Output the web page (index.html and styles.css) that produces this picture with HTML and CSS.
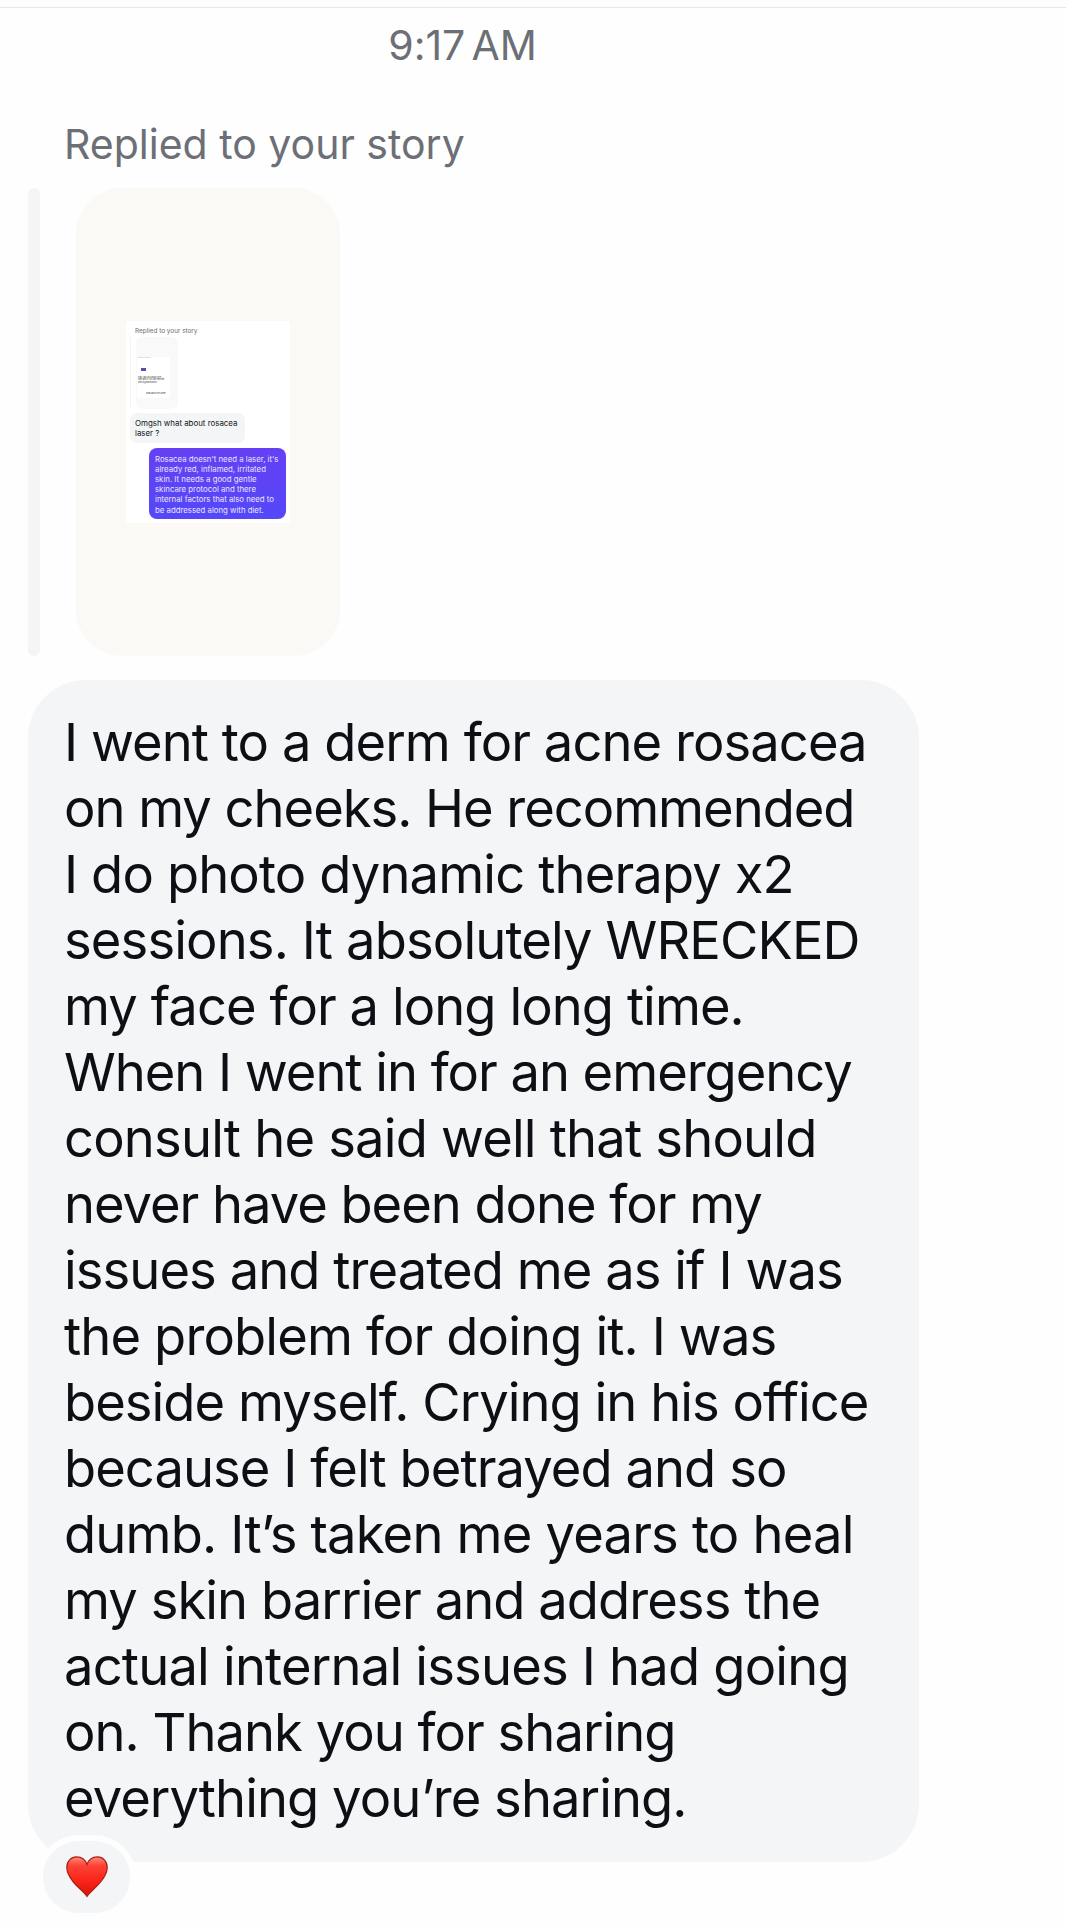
FILE: index.html
```html
<!DOCTYPE html>
<html lang="en">
<head>
<meta charset="utf-8">
<title>Messages</title>
<link rel="stylesheet" href="styles.css">
</head>

<body>
	<div class="thread">
		<div class="time">9:17 AM</div>
		<div class="context">Replied to your story</div>

		<div class="story">
			<div class="bar"></div>
			<div class="story-card">
				<div class="shot">
					<div class="shot-title">Replied to your story</div>
					<div class="shot-story">
						<div class="shot-bar"></div>
						<div class="shot-thumb">
							<div class="mini">
								<p class="mini-label">Replied to your story</p>
								<div class="mini-reply"></div>
								<p class="mini-text">Can I ask you about skin<br>care and if you can help me<br>with a good product</p>
								<p class="mini-foot">what about this laser</p>
							</div>
						</div>
					</div>
					<div class="shot-in">Omgsh what about rosacea<br>laser ?</div>
					<div class="shot-out">Rosacea doesn't need a laser, it's<br>already red, inflamed, irritated<br>skin. It needs a good gentle<br>skincare protocol and there<br>internal factors that also need to<br>be addressed along with diet.</div>
				</div>
			</div>
		</div>

		<div class="bubble">
			<p class="message">
				<span class="l1">I went to a derm for acne rosacea</span><br>
				<span class="l2">on my cheeks. He recommended</span><br>
				<span class="l3">I do photo dynamic therapy x2</span><br>
				<span class="l4">sessions. It absolutely WRECKED</span><br>
				<span class="l5">my face for a long long time.</span><br>
				<span class="l6">When I went in for an emergency</span><br>
				<span class="l7">consult he said well that should</span><br>
				<span class="l8">never have been done for my</span><br>
				<span class="l9">issues and treated me as if I was</span><br>
				<span class="l10">the problem for doing it. I was</span><br>
				<span class="l11">beside myself. Crying in his office</span><br>
				<span class="l12">because I felt betrayed and so</span><br>
				<span class="l13">dumb. It’s taken me years to heal</span><br>
				<span class="l14">my skin barrier and address the</span><br>
				<span class="l15">actual internal issues I had going</span><br>
				<span class="l16">on. Thank you for sharing</span><br>
				<span class="l17">everything you’re sharing.</span>
			</p>
			<div class="reaction">
				<svg class="heart" viewBox="0 0 42 42">
					<defs>
						<linearGradient id="red" x1="0" y1="0" x2="0" y2="1">
							<stop offset="0" stop-color="#ff8a78"/>
							<stop offset=".22" stop-color="#fc4336"/>
							<stop offset=".6" stop-color="#fb2419"/>
							<stop offset="1" stop-color="#d41408"/>
						</linearGradient>
					</defs>
					<path d="M21 40.4C18 36.500 12 31.500 7 25.500C3 20.500 .8 16.500 .8 11.500C.8 5.200 5 .9 10.700 .9C15.500 .9 19.300 3.700 21 8.500C22.700 3.700 26.500 .9 31.300 .9C37 .9 41.200 5.200 41.200 11.500C41.200 16.500 39 20.500 35 25.500C30 31.500 24 36.500 21 40.400Z" fill="url(#red)" stroke="#a91e14" stroke-width="1.200"/>
				</svg>
			</div>
		</div>
	</div>
</body>
</html>
```

FILE: styles.css
```css
body {
	margin: 0;
	background: #fefefe;
	font-family: Inter, "Liberation Sans", sans-serif;
}

p {
	margin: 0;
}

.thread {
	box-sizing: border-box;
	height: 1920px;
	overflow: hidden;
	margin-top: 7px;
	border-top: 1px solid #e6e7e9;
	padding: 12px 28px 0;
	white-space: nowrap;
}

.time {
	width: 869px;
	height: 50px;
	text-align: center;
	font-size: 41px;
	line-height: 50px;
	word-spacing: -5px;
	letter-spacing: -0.1px;
	color: #6c6f76;
}

.context {
	margin: 49px 0 18px 36px;
	height: 51px;
	font-size: 41px;
	line-height: 51px;
	color: #6c6f76;
}

.story {
	display: flex;
	gap: 36px;
	height: 468px;
}

.bar {
	width: 12px;
	border-radius: 6px;
	background: #f3f5f7;
}

.story-card {
	display: flex;
	align-items: center;
	justify-content: center;
	width: 264px;
	border-radius: 46px;
	background: #faf9f5;
}

.shot {
	box-sizing: border-box;
	width: 164px;
	height: 202px;
	padding: 5px 4px 3px;
	border-radius: 4px;
	background: #fff;
}

.shot-title {
	margin-left: 5px;
	height: 11px;
	font-size: 6.4px;
	line-height: 10px;
	color: #6c6f76;
}

.shot-story {
	display: flex;
	gap: 5px;
	height: 72px;
}

.shot-bar {
	width: 1px;
	background: #f2f3f5;
}

.shot-thumb {
	box-sizing: border-box;
	width: 42px;
	padding: 20px 8px 0 1px;
	border-radius: 7px;
	background: #f9f9fa;
}

.mini {
	width: 33px;
	height: 41px;
	background: #fff;
	border-radius: 2px;
	color: #333;
}

.mini-label {
	margin-left: 1px;
	font-size: 1.3px;
	line-height: 2px;
	color: #777;
}

.mini-reply {
	width: 5px;
	height: 3px;
	margin: 9px 0 5px 4px;
	background: #5650b4;
}

.mini-text {
	margin-left: 1px;
	font-size: 2px;
	line-height: 2.3px;
}

.mini-foot {
	margin: 9px 0 0 9px;
	font-size: 2px;
	line-height: 2px;
}

.shot-in {
	box-sizing: border-box;
	width: 115px;
	height: 30px;
	margin-top: 4px;
	padding: 5px 0 0 5px;
	border-radius: 7px;
	background: #f3f5f7;
	font-size: 7.9px;
	line-height: 10.2px;
	color: #111418;
}

.shot-out {
	box-sizing: border-box;
	width: 137px;
	height: 71px;
	margin: 5px 0 0 auto;
	padding: 5.5px 0 0 6px;
	border-radius: 8px;
	background: linear-gradient(#6540f4, #5448f8);
	font-size: 7.8px;
	line-height: 10.2px;
	color: #e9e4ff;
}

.bubble {
	box-sizing: border-box;
	position: relative;
	width: 891px;
	height: 1182px;
	margin-top: 24px;
	padding: 29px 0 0 36px;
	border-radius: 58px;
	background: #f3f5f7;
}

.message {
	font-size: 52.5px;
	line-height: 66px;
	color: #0c1014;
}

/* tracking per line */
.l1, .l5, .l9, .l12, .l14, .l17 {
	letter-spacing: -0.94px;
}

.l2, .l6, .l8 {
	letter-spacing: -1.03px;
}

.l3, .l4, .l10 {
	letter-spacing: -0.87px;
}

.l7, .l13, .l15 {
	letter-spacing: -0.81px;
}

.l11, .l16 {
	letter-spacing: -0.97px;
}

/* sits over the bottom edge of the bubble */
.reaction {
	position: absolute;
	left: 9px;
	top: 1155px;
	display: flex;
	align-items: center;
	justify-content: center;
	width: 87px;
	height: 72px;
	border: 6px solid #fefefe;
	border-radius: 42px;
	background: #f3f5f7;
}

.heart {
	width: 42px;
	height: 42px;
}
```
